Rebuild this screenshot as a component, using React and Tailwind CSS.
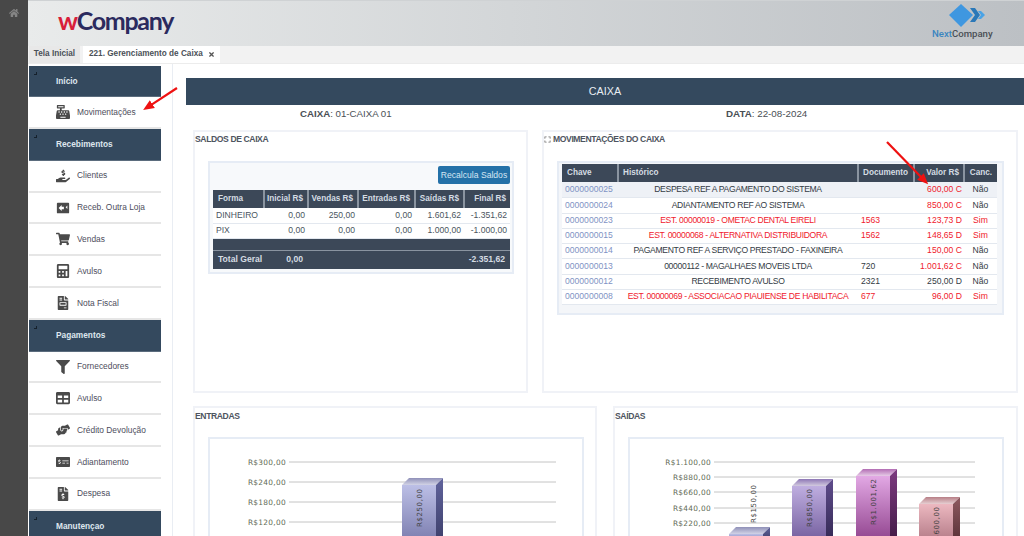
import React from 'react'
import { FaCashRegister, FaHandHoldingUsd, FaShoppingCart, FaCalculator, FaFileInvoice, FaFilter, FaTable, FaHandsHelping, FaMoneyCheckAlt, FaFileInvoiceDollar, FaHome, FaTimes, FaExpand } from 'react-icons/fa'

// caixa escura com setas, nao tem no pacote de icones
function OutraLojaIcon(props) {
    return (
        <svg {...props} viewBox="0 0 16 16">
            <rect x="1" y="2" width="14" height="12" rx="1" fill="currentColor" />
            <path d="M3 8 L6.5 4.5 V6.5 H9 V9.5 H6.5 V11.5 Z" fill="#ffffff" />
            <path d="M13 5 V9 L11 7 Z" fill="#ffffff" />
        </svg>
    )
}

const menu = [
    { title: 'Início', items: [{ label: 'Movimentações', Icon: FaCashRegister }] },
    {
        title: 'Recebimentos', items: [
            { label: 'Clientes', Icon: FaHandHoldingUsd },
            { label: 'Receb. Outra Loja', Icon: OutraLojaIcon },
            { label: 'Vendas', Icon: FaShoppingCart },
            { label: 'Avulso', Icon: FaCalculator },
            { label: 'Nota Fiscal', Icon: FaFileInvoice },
        ]
    },
    {
        title: 'Pagamentos', items: [
            { label: 'Fornecedores', Icon: FaFilter },
            { label: 'Avulso', Icon: FaTable },
            { label: 'Crédito Devolução', Icon: FaHandsHelping },
            { label: 'Adiantamento', Icon: FaMoneyCheckAlt },
            { label: 'Despesa', Icon: FaFileInvoiceDollar },
        ]
    },
    { title: 'Manutençao', items: [] },
]

const saldos = [
    ['DINHEIRO', '0,00', '250,00', '0,00', '1.601,62', '-1.351,62'],
    ['PIX', '0,00', '0,00', '0,00', '1.000,00', '-1.000,00'],
]

const movs = [
    ['0000000025', 'DESPESA REF A PAGAMENTO DO SISTEMA', '', '600,00 C', 'Não', 0],
    ['0000000024', 'ADIANTAMENTO REF AO SISTEMA', '', '850,00 C', 'Não', 0],
    ['0000000023', 'EST. 00000019 - OMETAC DENTAL EIRELI', '1563', '123,73 D', 'Sim', 1],
    ['0000000015', 'EST. 00000068 - ALTERNATIVA DISTRIBUIDORA', '1562', '148,65 D', 'Sim', 1],
    ['0000000014', 'PAGAMENTO REF A SERVIÇO PRESTADO - FAXINEIRA', '', '150,00 C', 'Não', 0],
    ['0000000013', '00000112 - MAGALHAES MOVEIS LTDA', '720', '1.001,62 C', 'Não', 0],
    ['0000000012', 'RECEBIMENTO AVULSO', '2321', '250,00 D', 'Não', 2],
    ['0000000008', 'EST. 00000069 - ASSOCIACAO PIAUIENSE DE HABILITACA', '677', '96,00 D', 'Sim', 1],
]

function Sidebar() {
    return (
        <div className="absolute left-[29px] top-[65.5px] w-[132px]">
            {menu.map(group => (
                <div key={group.title}>
                    <div className="relative h-[31.8px] bg-[#34495e] border-b border-[#5b6c7d] flex items-center pl-[27px] text-[8.3px] font-bold text-[#dfe7ee]">
                        <span className="absolute left-[5px] top-[6px] w-[3px] h-[3px] border-r border-b border-[#16212c]"></span>
                        {group.title}
                    </div>
                    {group.items.map(item => (
                        <div key={item.label} className="h-[31.8px] bg-white border-b-2 border-[#e6e6e6] flex items-center text-[8.4px] text-[#4d4d5c]">
                            <span className="w-[48px] flex justify-end pr-[7px]">
                                <item.Icon className="w-[14px] h-[14px] text-[#4a4a4a]" />
                            </span>
                            {item.label}
                        </div>
                    ))}
                </div>
            ))}
        </div>
    )
}

function SaldosTable() {
    const th = "border-l-2 border-[#8a94a0] text-right pr-[4px] text-[8.2px] font-bold whitespace-nowrap"
    return (
        <table className="absolute left-[3px] top-[27px] w-[297px] table-fixed border-collapse text-[8.6px]">
            <colgroup>
                <col className="w-[51px]" /><col className="w-[44px]" /><col className="w-[50px]" />
                <col className="w-[57px]" /><col className="w-[49px]" /><col className="w-[46px]" />
            </colgroup>
            <thead>
                <tr className="h-[18px] bg-[#3c4858] text-[#d5dce3]">
                    <th className="text-left pl-[5px] text-[8.2px] font-bold">Forma</th>
                    <th className={th}>Inicial R$</th>
                    <th className={th}>Vendas R$</th>
                    <th className={th}>Entradas R$</th>
                    <th className={th}>Saídas R$</th>
                    <th className={th}>Final R$</th>
                </tr>
            </thead>
            <tbody>
                {saldos.map(row => (
                    <tr key={row[0]} className="h-[15px] bg-white border-b border-[#e3e8ef] text-[#4a5560]">
                        {row.map((cell, i) => (
                            <td key={i} className={i == 0 ? "pl-[3px] text-left" : "pr-[3px] text-right"}>{cell}</td>
                        ))}
                    </tr>
                ))}
                <tr className="h-[12px] bg-[#3c4858] border-b border-[#8a94a0]"><td colSpan="6"></td></tr>
                <tr className="h-[19px] bg-[#3c4858] text-[#d5dce3] font-bold">
                    <td className="pl-[5px] whitespace-nowrap">Total Geral</td>
                    <td className="text-right pr-[5px]">0,00</td>
                    <td colSpan="3"></td>
                    <td className="text-right pr-[5px]">-2.351,62</td>
                </tr>
            </tbody>
        </table>
    )
}

function MovsTable() {
    const th = "border-l-2 border-[#8a94a0] px-[4px] text-[8.2px] font-bold whitespace-nowrap"
    const black = 'text-[#333b44]'
    const red = 'text-[#f0202c]'
    return (
        <table className="absolute left-[3px] top-[1px] w-[435px] table-fixed border-collapse text-[8.6px]">
            <colgroup>
                <col className="w-[56px]" /><col className="w-[240px]" /><col className="w-[56px]" />
                <col className="w-[50px]" /><col className="w-[33px]" />
            </colgroup>
            <thead>
                <tr className="h-[18px] bg-[#3c4858] text-[#d5dce3]">
                    <th className="text-left pl-[5px] text-[8.2px] font-bold">Chave</th>
                    <th className={th + " text-left"}>Histórico</th>
                    <th className={th + " text-left"}>Documento</th>
                    <th className={th + " text-right"}>Valor R$</th>
                    <th className={th + " text-center"}>Canc.</th>
                </tr>
            </thead>
            <tbody>
                {movs.map((row, i) => (
                    <tr key={row[0]} className={(i == 1 || i == 5 ? "h-[16px] " : "h-[15px] ") + "border-b border-[#e3e8ef] " + (i == 0 ? "bg-[#eef1f6]" : "bg-white")}>
                        <td className="pl-[3px] text-[#7f93c4]">{row[0]}</td>
                        <td className={"text-center tracking-[-0.33px] whitespace-nowrap " + (row[5] == 1 ? red : black)}>{row[1]}</td>
                        <td className={"pl-[3px] " + (row[5] == 1 ? red : black)}>{row[2]}</td>
                        <td className={"text-right pr-[2px] " + (row[5] == 2 ? black : red)}>{row[3]}</td>
                        <td className={"text-center " + (row[5] == 1 ? red : black)}>{row[4]}</td>
                    </tr>
                ))}
            </tbody>
        </table>
    )
}

// barra 3D do grafico
function Bar({ x, top, color, label, labelY, above, bottom = 540 }) {
    const w = 34
    return (
        <g>
            <polygon points={`${x},${top + 7} ${x + 7},${top} ${x + w + 7},${top} ${x + w},${top + 7}`} fill={`url(#${color}T)`} />
            <polygon points={`${x + w},${top + 7} ${x + w + 7},${top} ${x + w + 7},${bottom} ${x + w},${bottom}`} fill={`url(#${color}S)`} />
            <rect x={x} y={top + 7} width={w} height={bottom - top - 7} fill={`url(#${color}F)`} />
            <text transform={`translate(${above ? x + 27 : x + 20},${labelY}) rotate(-90)`} fontSize="7" letterSpacing="0.6" fill="#3f3f3f" fontFamily="DejaVu Sans, sans-serif">{label}</text>
        </g>
    )
}

function Grad({ id, from, to }) {
    return (
        <linearGradient id={id} x1="0" y1="0" x2="0" y2="1">
            <stop offset="0" stopColor={from} />
            <stop offset="1" stopColor={to} />
        </linearGradient>
    )
}

function Grid({ ticks, x1, x2 }) {
    return ticks.map(t => (
        <g key={t.label}>
            <line x1={x1} x2={x2} y1={t.y} y2={t.y} stroke="#c4c4c4" strokeWidth="1" />
            <text x={x1 - 3} y={t.y + 3} textAnchor="end" fontSize="7.4" letterSpacing="0.3" fill="#5f6b55" fontFamily="DejaVu Sans, sans-serif">{t.label}</text>
        </g>
    ))
}

// os graficos ficam em coordenadas da pagina pra bater com o layout
function Charts() {
    return (
        <svg className="absolute left-0 top-0" width="1024" height="536">
            <defs>
                <Grad id="aF" from="#bcbfe6" to="#7d7fb0" />
                <Grad id="aT" from="#8f90b8" to="#d2d3e6" />
                <Grad id="aS" from="#60639c" to="#3e406c" />
                <Grad id="bF" from="#bfaee0" to="#75609f" />
                <Grad id="bT" from="#8d76b5" to="#d2cadf" />
                <Grad id="bS" from="#5f4c8c" to="#352a55" />
                <Grad id="cF" from="#e2a8e4" to="#92458f" />
                <Grad id="cT" from="#b26cb4" to="#e6cbe6" />
                <Grad id="cS" from="#7d3a80" to="#431c47" />
                <Grad id="dF" from="#ecb8c0" to="#b57c88" />
                <Grad id="dT" from="#b77e86" to="#e6cfd2" />
                <Grad id="dS" from="#8f5a60" to="#5a3238" />
            </defs>
            <Grid x1={289} x2={556} ticks={[
                { label: 'R$300,00', y: 462 }, { label: 'R$240,00', y: 482 },
                { label: 'R$180,00', y: 502 }, { label: 'R$120,00', y: 522 },
            ]} />
            <Bar x={402} top={478} color="a" label="R$250,00" labelY={527} />
            <Grid x1={714} x2={975} ticks={[
                { label: 'R$1.100,00', y: 462 }, { label: 'R$880,00', y: 477 }, { label: 'R$660,00', y: 492 },
                { label: 'R$440,00', y: 508 }, { label: 'R$220,00', y: 523 },
            ]} />
            <Bar x={729} top={527} color="a" label="R$150,00" labelY={523} above />
            <Bar x={792} top={479} color="b" label="R$850,00" labelY={527} />
            <Bar x={856} top={469} color="c" label="R$1.001,62" labelY={525} />
            <Bar x={919} top={497} color="d" label="R$600,00" labelY={545} />
        </svg>
    )
}

function Panel({ className, title, titleTop, icon, children }) {
    return (
        <div className={"absolute border-2 border-[#f0f2f7] " + className}>
            <div className={"absolute left-0 flex items-center gap-[2px] text-[8.6px] tracking-[-0.4px] font-bold text-[#4e5460] whitespace-nowrap " + titleTop}>
                {icon}
                {title}
            </div>
            {children}
        </div>
    )
}

function Arrow({ x1, y1, x2, y2, id }) {
    return (
        <line x1={x1} y1={y1} x2={x2} y2={y2} stroke="#ee1111" strokeWidth="2.2" markerEnd={`url(#${id})`} />
    )
}

export default function App() {
    return (
        <div className="relative w-[1024px] h-[536px] overflow-hidden bg-white [font-family:Liberation_Sans,Arial,sans-serif]">
            {/* barra lateral escura */}
            <div className="absolute left-0 top-0 w-[28px] h-full bg-[#484848] flex justify-center pt-[8px]">
                <FaHome className="w-[10px] h-[10px] text-[#858585]" />
            </div>

            {/* cabecalho */}
            <div className="absolute left-[28px] right-0 top-0 h-[46px] border-t border-[#cfd2d4] bg-gradient-to-r from-[#e9ebeb] to-[#bcc0c4]">
                <div className="absolute left-[30px] top-[2px] text-[25px] leading-[34px] font-bold tracking-[-1.3px] text-[#2b2a5e] [font-family:Lato,sans-serif]">
                    <span className="text-[#d81e3a]">w</span>Company
                </div>
                <svg className="absolute left-[921px] top-[3px]" width="36" height="24" viewBox="0 0 36 24">
                    <polygon points="0,11 12,0 24,11 12,23" fill="#3f97e0" />
                    <polygon points="21,4 26,4 31,11 26,18 21,18 26,11" fill="#2a78b8" />
                    <polygon points="29,7 32,7 36,11 32,15 29,15 32,11" fill="#4aa3e6" />
                </svg>
                <div className="absolute left-[904px] top-[27px] text-[9.6px] font-medium leading-[12px] text-[#4a4f55] [font-family:Roboto,sans-serif]">
                    <span className="text-[#3a85c0]">Next</span>Company
                </div>
            </div>

            {/* abas */}
            <div className="absolute left-[28px] right-0 top-[46px] h-[18px] bg-[#f2f2f2] border-b border-[#ececec] flex items-end text-[8.2px] font-bold text-[#4b5158]">
                <div className="ml-[1px] h-[17px] w-[51px] bg-[#e8e8e8] flex items-center justify-center whitespace-nowrap">Tela Inicial</div>
                <div className="ml-[3px] h-[17px] w-[137px] bg-white flex items-center pl-[6px] whitespace-nowrap">
                    221. Gerenciamento de Caixa
                    <FaTimes className="ml-[5px] w-[7px] h-[7px] text-[#555555]" />
                </div>
            </div>

            <Sidebar />
            <div className="absolute left-[172px] top-[64px] w-px h-[472px] bg-[#e9edf3]"></div>

            {/* titulo */}
            <div className="absolute left-[186px] right-0 top-[78px] h-[27px] pb-[1px] bg-[#34495e] flex items-center justify-center text-[10.8px] text-[#e8edf2]">CAIXA</div>
            <div className="absolute left-[300px] top-[107px] text-[9.7px] leading-[13px] text-[#4a4f55]"><b>CAIXA</b>: 01-CAIXA 01</div>
            <div className="absolute left-[726px] top-[107px] text-[9.8px] leading-[13px] text-[#4a4f55]"><b>DATA</b>: 22-08-2024</div>

            <Panel className="left-[193px] top-[130px] w-[335px] h-[263px]" titleTop="top-[1px]" title="SALDOS DE CAIXA">
                <div className="absolute left-[13px] top-[29px] w-[306px] h-[113px] border-2 border-[#e6ecf5] bg-[#f7f9fb]">
                    <div className="absolute left-[228px] top-[3px] w-[72px] h-[18px] rounded-[2px] bg-[#2471a8] flex items-center justify-center text-[8.6px] text-[#d4e6f3]">Recalcula Saldos</div>
                    <SaldosTable />
                </div>
            </Panel>

            <Panel className="left-[542px] top-[130px] w-[476px] h-[263px]" titleTop="top-[1px]" title="MOVIMENTAÇÕES DO CAIXA" icon={<FaExpand className="w-[7px] h-[7px] text-[#777777]" />}>
                <div className="absolute left-[13px] top-[29px] w-[447px] h-[154px] border-2 border-[#e6ecf5] bg-[#f4f6f9]">
                    <MovsTable />
                </div>
            </Panel>

            <Panel className="left-[193px] top-[406px] w-[404px] h-[140px]" titleTop="top-[2px]" title="ENTRADAS">
                <div className="absolute left-[13px] top-[29px] w-[376px] h-[110px] border-2 border-[#e6ecf5] bg-white"></div>
            </Panel>

            <Panel className="left-[613px] top-[406px] w-[405px] h-[140px]" titleTop="top-[2px]" title="SAÍDAS">
                <div className="absolute left-[13px] top-[29px] w-[376px] h-[110px] border-2 border-[#e6ecf5] bg-white"></div>
            </Panel>

            <Charts />

            {/* setas vermelhas */}
            <svg className="absolute left-0 top-0 pointer-events-none" width="1024" height="536">
                <defs>
                    <marker id="seta" markerWidth="5" markerHeight="5" refX="1" refY="2.5" orient="auto">
                        <polygon points="0,0.4 5,2.5 0,4.6" fill="#ee1111" />
                    </marker>
                </defs>
                <Arrow x1={177} y1={88} x2={150.5} y2={105.3} id="seta" />
                <Arrow x1={887} y1={142} x2={922} y2={178} id="seta" />
            </svg>
        </div>
    )
}
